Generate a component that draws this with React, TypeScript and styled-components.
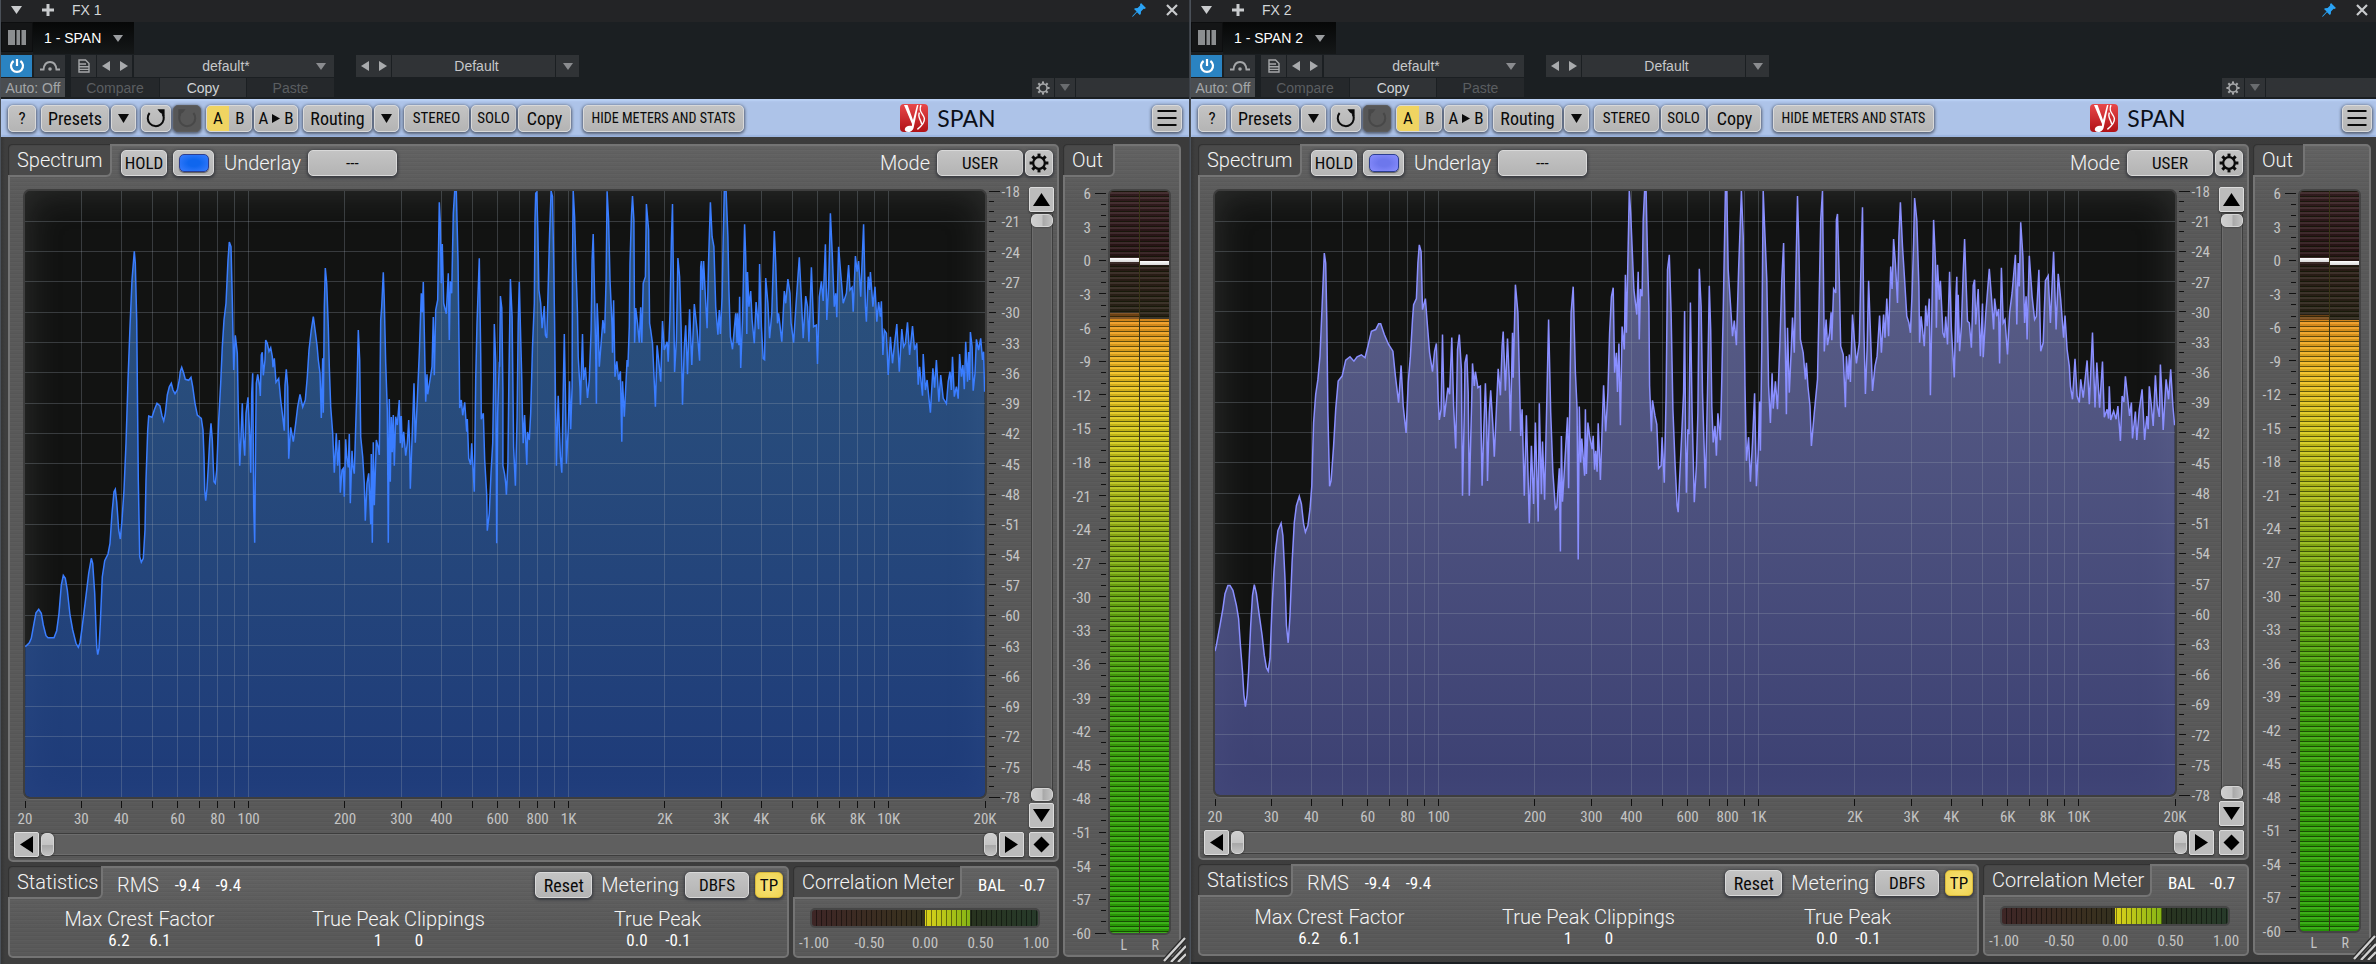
import React from 'react';
import styled, { createGlobalStyle, css } from 'styled-components';

/* ---------- data ---------- */

/* Each segment holds "x,y" samples. x is in 1/unit pixels counted from start,
   a pixel offset inside the plot; y is in thirds of a pixel. */
type TraceSegment = { start: number; unit: number; points: string };

type PluginState = {
  title: string;
  slot: string;
  color: string;
  swatch: string;
  fillTop: string;
  fillBottom: string;
  trace: TraceSegment[];
  lit: number;
  corrEnd: number;
};

const blueTrace: TraceSegment[] = [
  {
    start: -25,
    unit: 3,
    points:
      '76,1400 88,1388 94,1375 102,1330 108,1298 116,1288 124,1300 130,1335 138,1367 144,1373 162,1373 170,1352 177,1300 184,1215 190,1186 196,1195 202,1230 210,1305 218,1350 228,1390 235,1402 240,1388 246,1345 256,1265 266,1180 274,1135 278,1150 284,1240 290,1400 293,1424 297,1405 301,1330 307,1190 314,1142 324,1122 330,1090 336,1000 342,935 346,928 350,965 356,1050 361,1077 366,1020 372,930 378,790 384,600 390,440 396,300 403,214 406,250 410,420 415,900 419,1130 424,1147 430,1135 435,1050 438,900 443,750 446,708 456,712 463,690 471,670 480,678 486,708 491,723 496,700 502,645 508,620 514,610 519,630 525,641 532,630 538,600 541,574 545,562 551,580 556,598 566,601 573,592 578,620 585,670 592,705 604,715 609,750 612,830 614,930 617,962 621,925 625,860 629,780 633,730 637,780 640,860 642,905 646,910 650,870 656,720 662,610 667,500 672,420 678,370 684,240 688,186 693,200 697,360 701,570 706,466 712,520 715,690 719,857 723,770 727,670 730,770 734,827 738,700 744,652 749,770 752,878 755,640 758,580 761,980 764,1088 767,760 769,610 773,583 779,620 781,648 784,525 787,517 790,586 795,540 797,480 802,490 807,514 812,503 817,530 819,562 823,535 828,607 836,595 842,660 848,710 853,752 855,616 859,568 863,620 866,836 872,742 880,785 887,730 893,680 900,643 908,681 916,660 922,590 927,510 934,450 940,410 946,455 951,495 955,540 960,580 964,714 968,535 970,698 973,380 976,264 980,310 985,440 988,560 992,680 998,760 1003,878 1009,760 1013,857 1016,815 1018,780 1021,938 1026,870 1030,865 1033,950 1037,778 1040,830 1045,862 1048,762 1051,970 1056,812 1059,860 1063,881 1067,740 1071,620 1075,450 1079,540 1082,770 1088,830 1093,910 1096,1022 1101,910 1106,880 1109,950 1112,1033 1114,822 1117,1088 1120,787 1123,976 1129,780 1134,800 1138,825 1142,420 1145,380 1150,277 1153,365 1157,550 1162,690 1165,1088 1168,657 1171,905 1174,711 1177,817 1180,705 1183,857 1187,710 1192,735 1198,660 1201,790 1204,708 1207,803 1211,755 1217,827 1222,790 1226,720 1229,800 1231,926 1236,780 1242,610 1246,788 1252,660 1258,520 1264,340 1267,397 1270,306 1275,560 1277,665 1281,583 1283,643 1290,600 1296,560 1300,411 1303,586 1307,390 1313,360 1318,67 1321,130 1324,310 1327,192 1331,370 1339,401 1345,280 1348,480 1351,304 1355,340 1360,100 1364,33 1369,33 1374,240 1378,560 1379,684 1384,660 1388,706 1394,667 1400,755 1402,717 1406,835 1412,854 1415,790 1423,935 1427,600 1431,430 1438,235 1442,520 1444,718 1450,700 1454,840 1460,944 1462,1052 1468,1000 1473,880 1478,790 1481,600 1483,432 1487,540 1490,1090 1493,700 1498,545',
  },
  {
    start: 455,
    unit: 2.8,
    points:
      '55,560 57,348 61,384 64,630 64,857 69,882 72,910 74,944 78,850 81,594 85,297 90,410 94,800 99,917 104,710 107,430 110,306 113,440 117,600 119,710 121,790 125,705 131,854 133,756 138,780 142,700 147,500 152,370 154,120 156,40 159,36 162,160 165,330 170,370 174,445 180,378 183,465 187,474 191,320 195,160 199,33 203,50 206,230 209,430 211,640 214,857 219,647 225,830 229,878 233,640 236,462 239,640 242,851 247,750 251,604 254,748 258,620 259,250 261,33 265,110 268,240 273,400 275,530 280,625 281,674 287,462 290,600 295,562 301,654 306,600 311,450 314,240 317,162 321,350 324,520 326,671 328,370 331,440 334,560 339,490 344,420 349,460 353,300 356,34 360,120 364,300 370,440 371,518 374,361 378,590 383,544 388,600 393,574 397,785 399,604 404,710 409,600 412,540 414,560 418,440 420,250 424,110 427,48 431,120 433,488 436,384 441,430 446,488 450,382 453,488 457,310 463,290 466,72 472,150 475,430 478,450 483,490 491,680 496,496 502,560 506,605 511,423 516,510 524,485 527,545 532,400 536,180 539,72 543,420 545,576 550,480 554,234 559,290 563,440 567,674 572,500 576,436 581,583 587,388 593,555 600,372 608,450 615,542 618,262 620,243 623,330 626,243 631,350 636,445 640,240 645,67 650,170 655,200 660,380 666,464 670,390 673,462 678,350 681,180 684,33 689,33 694,170 697,330 701,470 707,508 716,400 720,490 721,400 725,496 727,350 730,564 735,420 741,133 744,230 747,462 749,276 753,380 758,333 762,420 768,490 773,366 780,448 783,252 788,440 793,536 797,539 800,294 806,370 811,475 817,400 824,153 828,250 833,430 836,400 845,485 852,333 856,370 862,297 868,340 871,430 878,488 885,370 894,232 899,340 905,475 912,348 917,380 921,485 928,262 934,440 942,435 945,552 950,350 956,304 961,363 967,193 971,420 976,320 981,100 986,210 992,380 996,340 999,412 1004,200 1010,280 1017,370 1026,340 1032,255 1036,330 1042,322 1045,395 1051,228 1056,275 1060,243 1066,350 1074,133 1079,380 1082,425 1087,290 1091,330 1093,276 1100,380 1106,320 1111,425 1116,366 1121,410 1124,364 1128,525 1132,450 1138,460 1143,585 1149,470 1155,550 1161,490 1167,432 1174,575 1181,447 1186,500 1191,490 1197,427 1203,525 1211,438 1217,510 1223,490 1227,614 1231,560 1239,647 1241,522 1247,630 1252,600 1261,698 1268,565 1273,623 1278,540 1285,665 1290,585 1297,655 1306,671 1311,605 1316,575 1320,630 1323,530 1328,650 1334,620 1339,656 1343,522 1348,590 1352,555 1356,628 1360,485 1365,605 1368,516 1371,600 1373,456 1378,500 1381,632 1386,580 1390,478 1396,510 1402,475 1407,540 1410,515 1413,635',
  },
];

const violetTrace: TraceSegment[] = [
  {
    start: -25,
    unit: 2.8,
    points:
      '70,1418 74,1400 84,1340 92,1290 98,1245 106,1220 112,1220 120,1235 130,1280 136,1320 141,1400 147,1480 151,1550 155,1585 160,1550 164,1480 170,1340 175,1250 180,1218 186,1245 194,1310 202,1370 208,1430 214,1468 219,1478 224,1440 229,1300 235,1180 240,1110 246,1055 255,1033 260,1070 266,1200 270,1340 275,1393 280,1310 286,1150 292,1030 298,980 306,952 312,975 318,1035 323,1060 330,1040 336,990 341,920 346,730 352,645 358,600 364,530 370,380 376,220 380,250 383,420 386,700 391,922 395,905 402,800 408,690 415,605 426,590 436,542 448,532 459,545 468,532 480,526 490,535 498,500 508,455 520,450 528,433 534,433 544,465 556,495 568,515 575,590 584,670 591,558 597,680 605,761 611,610 617,530 623,420 626,375 634,357 638,250 642,195 647,215 651,390 659,357 665,440 671,520 679,577 685,515 690,492 695,660 698,722 703,690 707,465 712,713 722,625 727,645 733,474 738,680 744,808 749,510 754,465 760,570 763,950 768,700 770,550 775,525 779,640 782,950 789,650 791,552 796,620 799,577 806,625 813,620 818,920 822,770 827,612 831,740 833,906 838,700 842,633 848,740 852,833 858,690 863,568 869,648 874,500 877,456 883,634 889,477 894,600 897,755 903,460 905,595 911,315 918,400 923,620 926,770 930,690 936,950 942,708 950,1033 956,800 962,975 967,730 975,1028 978,672 984,946 987,787 993,962 998,720 1004,420 1010,700 1016,880 1023,990 1027,985 1034,868 1037,1118 1040,770 1043,968 1050,840 1057,714 1060,928 1064,620 1067,400 1073,321 1079,580 1084,690 1087,1142 1090,682 1094,850 1097,778 1105,890 1107,690 1110,885 1114,730 1119,770 1126,810 1129,770 1133,872 1136,815 1140,878 1143,732 1149,903 1154,750 1158,618 1164,757 1170,640 1175,460 1180,352 1185,324 1189,580 1194,520 1197,638 1201,492 1205,738 1210,441 1216,510 1219,285 1222,460 1226,240 1230,33 1234,100 1237,180 1243,330 1251,405 1255,276 1258,480 1261,328 1266,350 1269,120 1273,33 1277,33 1281,230 1285,380 1287,620 1292,757 1295,663 1302,710 1307,735 1312,868 1319,860 1322,774 1328,911 1333,650 1337,270 1342,225 1347,400 1352,690 1358,850 1364,980 1367,1000 1371,900 1378,740 1382,640 1385,394 1388,800 1390,941 1394,750 1397,765 1401,369 1406,700 1412,970 1418,860 1422,700 1426,267 1431,380 1435,640 1443,928 1449,640 1454,318 1458,450 1461,680 1465,790 1470,740 1474,830 1478,702 1485,783 1489,600 1493,400 1499,33 1503,33 1507,270 1513,370 1519,470 1524,423 1530,497 1536,270 1544,33 1549,170 1554,620 1558,845 1564,774',
  },
  {
    start: 465,
    unit: 2.8,
    points:
      '197,908 203,790 209,642 214,922 219,820 223,667 225,815 229,500 233,33 237,140 243,300 248,620 253,731 258,582 261,688 267,606 273,690 280,480 285,300 290,190 294,440 298,705 301,445 306,640 311,520 315,414 320,520 325,250 329,48 333,200 337,480 345,520 351,600 354,550 358,620 364,680 368,800 376,700 385,600 389,400 394,120 399,33 402,330 404,516 409,420 413,497 419,460 423,398 425,482 430,328 436,340 438,120 441,102 446,300 450,500 457,525 463,684 466,530 471,600 474,525 477,608 483,405 489,490 494,552 502,490 508,200 511,82 515,450 519,644 524,510 528,303 534,480 539,635 546,560 552,530 559,408 564,520 570,405 574,475 579,357 584,470 590,260 594,328 598,178 603,250 609,370 613,170 617,67 623,200 629,300 635,410 641,430 645,460 650,340 654,190 657,54 663,120 669,320 671,490 675,410 684,500 688,378 692,440 698,357 701,648 706,360 710,120 715,240 718,445 721,255 726,360 729,303 736,460 741,475 744,411 749,495 755,276 760,450 768,594 773,340 775,291 777,490 779,345 783,515 788,440 793,280 797,178 801,310 805,425 810,430 816,505 821,318 825,300 828,435 835,328 841,530 847,372 849,533 856,405 866,267 872,350 878,450 881,357 887,410 892,388 895,552 900,264 905,430 910,420 917,525 923,400 930,340 939,225 943,435 947,250 950,320 954,127 960,230 965,430 969,350 972,480 978,228 986,350 993,420 998,410 1005,270 1010,515 1017,490 1023,303 1031,288 1037,430 1046,216 1053,450 1059,282 1066,360 1074,475 1078,408 1084,510 1090,560 1093,620 1099,660 1106,538 1112,650 1118,670 1122,600 1129,655 1140,543 1146,675 1155,459 1162,685 1167,549 1175,685 1183,546 1188,714 1196,690 1200,718 1202,621 1206,722 1214,695 1221,720 1226,680 1233,785 1238,650 1243,668 1247,591 1253,650 1259,710 1264,670 1267,778 1275,697 1279,782 1286,690 1294,630 1301,782 1307,710 1311,750 1314,621 1320,680 1325,740 1331,588 1336,675 1342,713 1345,555 1349,640 1353,752 1361,600 1368,660 1374,570 1380,680 1385,738',
  },
];

const PLOT_W = 960;
const PLOT_H = 606;

const tracePoints = (segments: TraceSegment[]) =>
  segments
    .flatMap(({ start, unit, points }) =>
      points.split(' ').map((pair) => {
        const [x, y] = pair.split(',').map(Number);
        return `${(start + x / unit).toFixed(1)},${(y / 3 - 11).toFixed(1)}`;
      }),
    )
    .join(' ');

const plugins: PluginState[] = [
  {
    title: 'FX 1',
    slot: '1 - SPAN',
    color: '#3a7dff',
    swatch: '#0f66ee',
    fillTop: 'rgba(60,122,188,0.62)',
    fillBottom: 'rgba(34,72,156,0.75)',
    trace: blueTrace,
    lit: 17.2,
    corrEnd: 70,
  },
  {
    title: 'FX 2',
    slot: '1 - SPAN 2',
    color: '#8a8fff',
    swatch: '#6d77ec',
    fillTop: 'rgba(130,136,198,0.66)',
    fillBottom: 'rgba(76,82,152,0.72)',
    trace: violetTrace,
    lit: 17.4,
    corrEnd: 71,
  },
];

const freqPos = (hz: number) => (Math.log10(hz / 20) / 3) * 100;
const gridFreqs = [30, 40, 50, 60, 70, 80, 90, 100, 200, 300, 400, 500, 600, 700, 800, 900, 1000, 2000, 3000, 4000, 5000, 6000, 7000, 8000, 9000, 10000];
const freqLabels: [number, string][] = [
  [20, '20'], [30, '30'], [40, '40'], [60, '60'], [80, '80'], [100, '100'], [200, '200'], [300, '300'],
  [400, '400'], [600, '600'], [800, '800'], [1000, '1K'], [2000, '2K'], [3000, '3K'], [4000, '4K'],
  [6000, '6K'], [8000, '8K'], [10000, '10K'], [20000, '20K'],
];
const dbValues = Array.from({ length: 61 }, (_, i) => -18 - i);
const outValues = Array.from({ length: 67 }, (_, i) => 6 - i);

/* ---------- shared styles ---------- */

const GlobalStyle = createGlobalStyle`
  *, *::before, *::after { box-sizing: border-box; }
  body { margin: 0; background: #1b1f22; font-family: "Liberation Sans", Arial, sans-serif; font-size: 14px; }
  button, select, input { font: inherit; color: inherit; margin: 0; padding: 0; border: 0; }
  h1, h2, dl, dt, dd, p { margin: 0; font: inherit; }
`;

const narrow = css`
  font-family: "Liberation Sans Narrow", "Roboto Condensed", "Liberation Sans", sans-serif;
`;
const light = css`
  font-family: Roboto, "Liberation Sans", sans-serif;
  font-weight: 300;
`;

const Rack = styled.main`
  display: grid;
  grid-template-columns: 595fr 593fr;
  min-height: 100vh;
`;

const Window = styled.section<{ $last: boolean }>`
  display: flex;
  flex-direction: column;
  min-width: 0;
  border-left: 1px solid #4a5058;
  border-right: ${(p) => (p.$last ? '0' : '1px solid #3c4148')};
  padding-bottom: ${(p) => (p.$last ? '2px' : '0')};
  background: #1b1f22;
  color: #d4d6d8;
`;

/* ---------- host chrome ---------- */

const TitleBar = styled.header<{ $gutter: number }>`
  display: flex;
  align-items: center;
  height: 22px;
  padding: 0 ${(p) => p.$gutter + 6}px 2px 7px;
  background: #232426;
`;

const TitleButton = styled.button`
  display: grid;
  place-items: center;
  width: 16px;
  height: 20px;
  background: none;
`;

const TitleText = styled.h1`
  flex: 1;
  padding-left: 16px;
`;

const Spacer = styled.div<{ $w: number }>`
  width: ${(p) => p.$w}px;
`;

const SlotBar = styled.div`
  display: flex;
  height: 33px;
`;

const RackButton = styled.button`
  display: grid;
  place-items: center;
  width: 32px;
  height: 30px;
  background: #141516;
  border: 1px solid #0d0e0f;
`;

const SlotTab = styled.button`
  display: flex;
  align-items: center;
  gap: 12px;
  height: 32px;
  padding: 0 11px;
  background: linear-gradient(#060707, #151819);
  color: #fff;
`;

const HostRow = styled.div<{ $height: number }>`
  display: flex;
  height: ${(p) => p.$height}px;
  margin-bottom: ${(p) => (p.$height === 22 ? 1 : 2)}px;
`;

const HostButton = styled.button<{ $w: number; $tone?: 'on' | 'auto' | 'dim'; $gap?: number; $end?: boolean }>`
  display: grid;
  place-items: center;
  width: ${(p) => p.$w}px;
  margin-right: ${(p) => p.$gap ?? 1}px;
  margin-left: ${(p) => (p.$end ? 'auto' : '0')};
  background: ${(p) => ({ on: '#2a83c2', auto: '#4a4d50', dim: '#25282b', base: '#303336' })[p.$tone ?? 'base']};
  color: ${(p) => ({ on: '#fff', auto: '#a4a6a8', dim: '#5b5e61', base: '#d2d4d6' })[p.$tone ?? 'base']};
`;

const HostSelectBox = styled.label<{ $w: number; $gap: number }>`
  display: grid;
  grid-template-columns: 1fr 18px;
  align-items: center;
  width: ${(p) => p.$w}px;
  margin-right: ${(p) => p.$gap}px;
  background: #303336;
  color: #c6c8ca;
`;

const HostSelect = styled.select<{ $full?: boolean }>`
  appearance: none;
  grid-column: 1 / ${(p) => (p.$full ? 'span 2' : 'span 1')};
  width: 100%;
  height: 22px;
  padding-left: ${(p) => (p.$full ? '6px' : '2px')};
  background: none;
  text-align: center;
  text-align-last: center;
`;

const HostFill = styled.div<{ $w: number }>`
  width: ${(p) => p.$w}px;
  background: #303336;
`;

/* ---------- plugin toolbar ---------- */

const PluginBar = styled.div<{ $gutter: number }>`
  display: flex;
  align-items: center;
  gap: 5px;
  height: 38px;
  padding: 0 ${(p) => p.$gutter + 4}px 0 7px;
  background: #adc3e8;
  box-shadow: inset 0 2px 2px #bcd2f6, inset 0 -2px 1px #9db6e0;
`;

const Group = styled.div`
  display: flex;
  gap: 2px;
`;

const chrome = css`
  background: linear-gradient(#c4c4c4, #b4b4b4);
  border: 1px solid #d9d9d9;
  border-radius: 5px;
  box-shadow: 0 1px 3px 1px rgba(30, 34, 44, 0.6);
  color: #0a0a0a;
`;

const PlugButton = styled.button<{ $w: number; $h?: number; $size?: number; $tone?: 'off' | 'yellow' }>`
  ${chrome}
  ${narrow}
  display: flex;
  align-items: center;
  justify-content: center;
  gap: 4px;
  width: ${(p) => p.$w}px;
  height: ${(p) => p.$h ?? 27}px;
  font-size: ${(p) => p.$size ?? 17}px;
  white-space: nowrap;
  ${(p) => p.$tone === 'off' && 'background: #575757; border-color: #5d5d5d; color: #484848;'}
  ${(p) => p.$tone === 'yellow' && 'background: radial-gradient(#f7e27d, #f0d44e); border-color: #d9b93c;'}
`;

const AbSwitch = styled.div`
  ${chrome}
  display: grid;
  grid-template-columns: 1fr 1fr;
  width: 46px;
  height: 27px;
  overflow: hidden;
`;

const AbHalf = styled.button<{ $on?: boolean }>`
  ${narrow}
  font-size: 17px;
  color: #0a0a0a;
  background: ${(p) => (p.$on ? '#f0d462' : 'transparent')};
`;

const WideButton = styled(PlugButton)`
  margin-left: 7px;
`;

const Brand = styled.div`
  display: flex;
  align-items: center;
  gap: 9px;
  margin: 0 auto;
  font-family: Lato, "Liberation Sans", sans-serif;
  font-size: 23px;
  color: #0b0f18;
`;

/* ---------- plugin body ---------- */

const Body = styled.div<{ $gutter: number }>`
  position: relative;
  flex: 1;
  display: grid;
  grid-template-columns: 1fr 118px;
  gap: 4px;
  padding: 7px ${(p) => p.$gutter + 5}px 7px 7px;
  background: linear-gradient(90deg, #353535, #3e3e3e 4px, #3b3b3b);
`;

const LeftColumn = styled.div`
  display: grid;
  grid-template-rows: 1fr 91px;
  gap: 4px;
  min-width: 0;
`;

const LowerRow = styled.div`
  display: grid;
  grid-template-columns: 1fr 266px;
  gap: 4px;
`;

const Panel = styled.section`
  display: flex;
  flex-direction: column;
  min-width: 0;
  border: 2px solid #747474;
  border-radius: 5px;
  background:
    repeating-linear-gradient(rgba(255, 255, 255, 0.02) 0 1px, transparent 1px 3px, rgba(0, 0, 0, 0.03) 3px 4px),
    linear-gradient(#626262, #595959 60px, #595959);
`;

const PanelHead = styled.div`
  display: flex;
  align-items: center;
  height: 31px;
`;

const Tab = styled.h2<{ $w: number }>`
  ${light}
  align-self: stretch;
  width: ${(p) => p.$w}px;
  margin: -2px 0 0 -2px;
  padding-left: 9px;
  border: solid #747474;
  border-width: 0 2px 2px 0;
  border-radius: 4px 0 6px 0;
  background: #4a4a4a;
  box-shadow: inset 1px 1px 1px #303030;
  color: #f4f4f4;
  font-size: 20px;
  line-height: 32px;
  white-space: nowrap;
`;

const Caption = styled.span<{ $left: number; $right: number }>`
  ${light}
  margin: 0 ${(p) => p.$right}px 0 ${(p) => p.$left}px;
  color: #f4f4f4;
  font-size: 20px;
  line-height: 24px;
  white-space: nowrap;
`;

const ControlLabel = styled.label`
  display: flex;
  align-items: center;
`;

const PlugSelect = styled.select<{ $w: number }>`
  ${chrome}
  ${narrow}
  appearance: none;
  width: ${(p) => p.$w}px;
  height: 26px;
  font-size: 17px;
  text-align: center;
  text-align-last: center;
`;

const HeadControls = styled.div<{ $end?: boolean }>`
  display: flex;
  align-items: center;
  padding-top: 3px;
  margin-left: ${(p) => (p.$end ? 'auto' : '9px')};
`;

const SwatchButton = styled.button<{ $color: string; $core: string }>`
  ${chrome}
  display: grid;
  place-items: center;
  width: 41px;
  height: 26px;
  margin-left: 6px;

  &::before {
    content: '';
    width: 30px;
    height: 18px;
    border-radius: 5px;
    border: 1px solid #2c3e90;
    background: radial-gradient(${(p) => p.$core} 30%, ${(p) => p.$color});
    box-shadow: 0 1px 1px rgba(0, 0, 0, 0.5);
  }
`;

const PlotArea = styled.div`
  flex: 1;
  display: grid;
  grid-template-columns: 1fr 25px;
  gap: 5px;
  padding: 10px 3px 0 13px;
`;

const Graph = styled.div`
  display: grid;
  grid-template-columns: 1fr 37px;
  grid-template-rows: minmax(300px, 1fr) 29px;
  padding-top: 2px;
  min-width: 0;
`;

const PlotFrame = styled.div`
  position: relative;
  border: 2px solid #3e3e3e;
  border-radius: 7px;
  overflow: hidden;
  background: #121312;
  box-shadow: 0 1px 0 #686868;
`;

const PlotSvg = styled.svg`
  position: absolute;
  inset: 0;
  width: 100%;
  height: 100%;
`;

const PlotGlow = styled.div`
  position: absolute;
  inset: 0;
  box-shadow: inset 0 0 36px rgba(120, 120, 120, 0.3);
`;

const Axis = styled.svg`
  display: block;
  width: 100%;
  height: 100%;
  overflow: visible;
  ${narrow}
  font-size: 15px;
  fill: #c4c4c4;
`;

const YAxisBox = styled.div<{ $top?: number }>`
  padding: ${(p) => p.$top ?? 2}px 0 2px;
`;

const XAxisBox = styled.div`
  padding: 0 2px;
`;

const Scroller = styled.div<{ $vertical?: boolean }>`
  display: flex;
  flex-direction: ${(p) => (p.$vertical ? 'column' : 'row')};
  align-items: center;
  gap: 2px;
  flex: 1;
  min-width: 0;
`;

const SquareButton = styled.button`
  display: grid;
  place-items: center;
  flex: none;
  width: 25px;
  height: 25px;
  border: 1px solid #dcdcdc;
  border-radius: 2px;
  background: #bcbcbc;
  box-shadow: 0 1px 2px #2c2c2c;
  color: #000;
`;

const Track = styled.div<{ $vertical?: boolean }>`
  flex: 1;
  display: flex;
  flex-direction: ${(p) => (p.$vertical ? 'column' : 'row')};
  align-items: center;
  min-width: 0;
  min-height: 0;
  ${(p) => (p.$vertical ? 'width: 22px;' : 'height: 23px;')}
  border: solid #3d3d3d;
  border-width: ${(p) => (p.$vertical ? '0 1px' : '1px 0')};
  background: #5f5f5f;
  box-shadow: inset 0 0 0 1px #6d6d6d;
`;

const thumb = css<{ $vertical?: boolean }>`
  appearance: none;
  width: ${(p) => (p.$vertical ? 22 : 13)}px;
  height: ${(p) => (p.$vertical ? 13 : 23)}px;
  border: 1px solid #d4d4d4;
  border-radius: 5px;
  background: linear-gradient(${(p) => (p.$vertical ? '90deg' : '180deg')}, #cfcfcf, #c4c4c4 50%, #a8a8a8 55%, #c2c2c2);
  box-shadow: 0 0 2px #222;
`;

const RangeEnd = styled.input<{ $vertical?: boolean }>`
  appearance: none;
  flex: 1;
  min-width: 0;
  min-height: 0;
  background: none;
  ${(p) => (p.$vertical ? 'writing-mode: vertical-lr; width: 22px;' : 'height: 23px;')}
  &::-webkit-slider-thumb { ${thumb} }
`;

const BottomScroll = styled.div`
  display: grid;
  grid-template-columns: 1fr 25px;
  gap: 5px;
  padding: 4px 3px 3px 4px;
`;

/* ---------- statistics ---------- */

const Pair = styled.span`
  display: inline-grid;
  grid-template-columns: 41px 41px;
  justify-content: center;
  ${narrow}
  color: #fff;
  font-size: 17px;
  line-height: 20px;
  text-align: center;
`;

const StatGrid = styled.dl`
  display: grid;
  grid-template-columns: repeat(3, 1fr);
  padding-top: 9px;
  text-align: center;
`;

const StatName = styled.dt`
  ${light}
  color: #f4f4f4;
  font-size: 20px;
  line-height: 22px;
`;

const CorrBar = styled.div<{ $end: number }>`
  height: 20px;
  margin: 9px 17px 0 15px;
  border: 2px solid #464646;
  border-radius: 5px;
  background:
    repeating-linear-gradient(90deg, transparent 0 4px, rgba(0, 0, 0, 0.45) 4px 5px),
    linear-gradient(
      90deg,
      #3e2626,
      #39301f 40%,
      #33301f 50%,
      #ddd21a 50%,
      #84b414 ${(p) => p.$end}%,
      #28331f ${(p) => p.$end}%,
      #273a2a
    );
`;

const CorrScale = styled.div`
  height: 24px;
  margin: 4px 21px 0 19px;
`;

/* ---------- output meter ---------- */

const OutGrid = styled.div`
  flex: 1;
  display: grid;
  grid-template-columns: 1fr 63px;
  grid-template-rows: 1fr 20px;
  padding: 12px 8px 0 0;
`;

const MeterFrame = styled.div`
  display: grid;
  grid-template-columns: 1fr 1fr;
  gap: 1px;
  border: 2px solid #444;
  border-radius: 6px;
  overflow: hidden;
  background: #3a3518;
`;

const Channel = styled.div<{ $lit: number; $faint?: boolean }>`
  position: relative;
  background:
    repeating-linear-gradient(rgba(10, 20, 0, 0.62) 0 1px, rgba(255, 255, 255, 0.08) 1px 3px, rgba(0, 0, 0, 0.12) 3px 5px),
    linear-gradient(
      #371f22,
      #2b1517 8%,
      #2d1f18 11%,
      #2b2418 ${(p) => p.$lit - (p.$faint ? 0.7 : 0)}%,
      #7a4a17 ${(p) => p.$lit - (p.$faint ? 0.7 : 0)}%,
      #7a4a17 ${(p) => p.$lit}%,
      #ee961f ${(p) => p.$lit}%,
      #f3c321 25%,
      #d8cc1a 33%,
      #a9bd18 43%,
      #72b010 54%,
      #3fa80a 68%,
      #2aa806
    );
`;

const PeakMark = styled.div<{ $at: number }>`
  position: absolute;
  top: ${(p) => p.$at}%;
  left: 0;
  right: 0;
  height: 4px;
  background: linear-gradient(#fff, #d8d8d8);
`;

const ChannelNames = styled.div`
  grid-column: 2;
  display: grid;
  grid-template-columns: 1fr 1fr;
  ${narrow}
  color: #c4c4c4;
  font-size: 14px;
  line-height: 20px;
  text-align: center;
`;

const ResizeGrip = styled.svg<{ $gutter: number }>`
  position: absolute;
  right: ${(p) => p.$gutter}px;
  bottom: 2px;
`;

/* ---------- icons ---------- */

const Tri = ({ dir = 'down', w = 10, h = 8, fill = 'currentColor' }: { dir?: 'up' | 'down' | 'left' | 'right'; w?: number; h?: number; fill?: string }) => {
  const d = { down: 'M0 0H10L5 10Z', up: 'M0 10H10L5 0Z', left: 'M10 0V10L0 5Z', right: 'M0 0V10L10 5Z' }[dir];
  return (
    <svg width={w} height={h} viewBox="0 0 10 10" preserveAspectRatio="none" fill={fill} aria-hidden="true">
      <path d={d} />
    </svg>
  );
};

const PlusIcon = () => (
  <svg width="14" height="14" viewBox="0 0 14 14" aria-hidden="true">
    <path d="M7 1V13M1 7H13" stroke="#c9cbcd" strokeWidth="3" />
  </svg>
);

const PinIcon = () => (
  <svg width="16" height="16" viewBox="0 0 16 16" fill="#2aa3f5" aria-hidden="true">
    <path d="M10 1L15 6L13.4 7L12.6 6.8L10 9.4L9.8 12L8.8 13L6 10.2L2 14.4L1 15L1.6 13.8L5.6 9.6L3 7L4 6.2L6.6 6L9.2 3.4L9 2.4Z" />
  </svg>
);

const CloseIcon = () => (
  <svg width="14" height="14" viewBox="0 0 14 14" aria-hidden="true">
    <path d="M2 2L12 12M12 2L2 12" stroke="#c9cbcd" strokeWidth="2.2" />
  </svg>
);

const RackIcon = () => (
  <svg width="18" height="15" viewBox="0 0 18 15" fill="#8c8e90" aria-hidden="true">
    <path d="M0 0H7V15H0ZM8.5 0H12V15H8.5ZM13.5 0H18V15H13.5Z" />
  </svg>
);

const PowerIcon = () => (
  <svg width="16" height="16" viewBox="0 0 16 16" fill="none" stroke="#fff" strokeWidth="2.2" aria-hidden="true">
    <path d="M4.6 3A6 6 0 1 0 11.4 3M8 1V8" />
  </svg>
);

const BypassIcon = () => (
  <svg width="20" height="12" viewBox="0 0 20 12" fill="none" stroke="#a5a7a9" strokeWidth="1.8" aria-hidden="true">
    <path d="M0 9.5H3.6C4 4.6 6.4 2 10 2S16 4.6 16.4 9.5H20" />
    <circle cx="10" cy="9" r="1.8" fill="#a5a7a9" stroke="none" />
  </svg>
);

const DocIcon = () => (
  <svg width="12" height="14" viewBox="0 0 12 14" fill="none" stroke="#a5a7a9" strokeWidth="1.4" aria-hidden="true">
    <path d="M1 1H7.5L11 4.5V13H1ZM1 5H8M1 7.8H11M1 10.4H11" />
  </svg>
);

const Gear = ({ size, color, teeth }: { size: number; color: string; teeth: number }) => (
  <svg width={size} height={size} viewBox="0 0 20 20" fill="none" stroke={color} aria-hidden="true">
    <circle cx="10" cy="10" r="5.8" strokeWidth="2.2" />
    {Array.from({ length: teeth }, (_, i) => (
      <path key={i} d="M10 0.6V4" strokeWidth="3" transform={`rotate(${(360 / teeth) * i} 10 10)`} />
    ))}
  </svg>
);

const TurnIcon = ({ redo }: { redo?: boolean }) => (
  <svg width="20" height="20" viewBox="0 0 20 20" fill="none" stroke="currentColor" strokeWidth="2" aria-hidden="true">
    <g transform={redo ? 'translate(20 0) scale(-1 1)' : undefined}>
      <path d="M3.6 5A8 8 0 1 0 16.6 6" />
      <path d="M11.4 1.2H18.6V8.4L16.6 6.2L14 4.4Z" fill="currentColor" stroke="none" />
    </g>
  </svg>
);

const MenuIcon = () => (
  <svg width="20" height="18" viewBox="0 0 20 18" stroke="#0a0a0a" strokeWidth="2" aria-hidden="true">
    <path d="M0.5 2H19.5M0.5 9H19.5M0.5 16H19.5" />
  </svg>
);

const LogoIcon = () => (
  <svg width="28" height="28" viewBox="0 0 28 28" aria-hidden="true">
    <defs>
      <linearGradient id="logo-red" x1="0" y1="0" x2="0" y2="1">
        <stop offset="0" stopColor="#e8484a" />
        <stop offset="1" stopColor="#b01217" />
      </linearGradient>
    </defs>
    <rect width="28" height="28" rx="4" fill="url(#logo-red)" />
    <path d="M4 1H7.6L13 16L17 1H18.4L14 22C13.6 25.6 11.6 28 8.4 28C5.6 28 4.6 26.6 4.8 25C5.2 22.6 8.4 21 11.8 22L12 20Z" fill="#fff" />
    <path d="M21 1C18 8 23.4 9.6 24.4 14.4C24.8 18.6 21.6 22 17.4 25.4M19.4 8.6C17.2 13 21 15.6 21.6 20" fill="none" stroke="#fff" strokeWidth="1.4" />
  </svg>
);

/* ---------- parts ---------- */

const Arrows = ({ gap, label }: { gap: number; label: string }) => (
  <>
    <HostButton $w={18} $gap={0} aria-label={`Previous ${label}`}>
      <Tri dir="left" w={8} h={10} fill="#a9abad" />
    </HostButton>
    <HostButton $w={17} $gap={gap} aria-label={`Next ${label}`}>
      <Tri dir="right" w={8} h={10} fill="#a9abad" />
    </HostButton>
  </>
);

const HostChrome = ({ state, gutter }: { state: PluginState; gutter: number }) => (
  <>
    <TitleBar $gutter={gutter}>
      <TitleButton aria-label="Window menu"><Tri w={11} h={8} fill="#c9cbcd" /></TitleButton>
      <Spacer $w={16} />
      <TitleButton aria-label="Add insert"><PlusIcon /></TitleButton>
      <TitleText>{state.title}</TitleText>
      <TitleButton aria-label="Pin window"><PinIcon /></TitleButton>
      <Spacer $w={17} />
      <TitleButton aria-label="Close"><CloseIcon /></TitleButton>
    </TitleBar>
    <SlotBar>
      <RackButton aria-label="Rack"><RackIcon /></RackButton>
      <SlotTab>{state.slot}<Tri w={10} h={7} fill="#9b9da0" /></SlotTab>
    </SlotBar>
    <HostRow $height={22}>
      <HostButton $w={31} $gap={2} $tone="on" aria-label="Power"><PowerIcon /></HostButton>
      <HostButton $w={31} $gap={6} aria-label="Bypass"><BypassIcon /></HostButton>
      <HostButton $w={25} aria-label="Preset file"><DocIcon /></HostButton>
      <Arrows gap={2} label="preset" />
      <HostSelectBox $w={200} $gap={22}>
        <HostSelect aria-label="Preset"><option>default*</option></HostSelect>
        <Tri w={10} h={7} fill="#8a8c8f" />
      </HostSelectBox>
      <Arrows gap={1} label="routing" />
      <HostSelectBox $w={163} $gap={1}>
        <HostSelect $full aria-label="Routing preset"><option>Default</option></HostSelect>
      </HostSelectBox>
      <HostButton $w={23} aria-label="Routing menu"><Tri w={10} h={7} fill="#8a8c8f" /></HostButton>
    </HostRow>
    <HostRow $height={19}>
      <HostButton $w={64} $gap={6} $tone="auto">Auto: Off</HostButton>
      <HostButton $w={88} $tone="dim">Compare</HostButton>
      <HostButton $w={86}>Copy</HostButton>
      <HostButton $w={87} $tone="dim">Paste</HostButton>
      <HostButton $w={22} $end aria-label="Settings"><Gear size={14} color="#a5a7a9" teeth={8} /></HostButton>
      <HostButton $w={20} aria-label="Settings menu"><Tri w={10} h={7} fill="#696c6f" /></HostButton>
      <HostFill $w={gutter + 110} />
    </HostRow>
  </>
);

const PluginToolbar = ({ gutter }: { gutter: number }) => (
  <PluginBar $gutter={gutter}>
    <PlugButton $w={28} aria-label="Help">?</PlugButton>
    <Group>
      <PlugButton $w={68} $size={18}>Presets</PlugButton>
      <PlugButton $w={25} aria-label="Preset list"><Tri w={11} h={9} /></PlugButton>
    </Group>
    <Group>
      <PlugButton $w={30} aria-label="Undo"><TurnIcon /></PlugButton>
      <PlugButton $w={28} $tone="off" aria-label="Redo" disabled><TurnIcon redo /></PlugButton>
    </Group>
    <Group>
      <AbSwitch role="group" aria-label="Compare states">
        <AbHalf $on>A</AbHalf>
        <AbHalf>B</AbHalf>
      </AbSwitch>
      <PlugButton $w={44}>A<Tri dir="right" w={8} h={9} />B</PlugButton>
    </Group>
    <Group>
      <PlugButton $w={69} $size={18}>Routing</PlugButton>
      <PlugButton $w={25} aria-label="Routing list"><Tri w={11} h={9} /></PlugButton>
    </Group>
    <Group>
      <PlugButton $w={65} $size={15}>STEREO</PlugButton>
      <PlugButton $w={45} $size={15}>SOLO</PlugButton>
      <PlugButton $w={53} $size={18}>Copy</PlugButton>
    </Group>
    <WideButton $w={161} $size={14}>HIDE METERS AND STATS</WideButton>
    <Brand><LogoIcon />SPAN</Brand>
    <PlugButton $w={30} aria-label="Menu"><MenuIcon /></PlugButton>
  </PluginBar>
);

const SpectrumPlot = ({ state, id }: { state: PluginState; id: string }) => {
  const points = tracePoints(state.trace);
  return (
    <PlotFrame>
      <PlotGlow />
      <PlotSvg viewBox={`0 0 ${PLOT_W} ${PLOT_H}`} preserveAspectRatio="none" role="img" aria-label="Spectrum">
        <defs>
          <linearGradient id={`${id}-fill`} gradientUnits="userSpaceOnUse" x1="0" y1="0" x2="0" y2={PLOT_H}>
            <stop offset="0" stopColor={state.fillTop} />
            <stop offset="1" stopColor={state.fillBottom} />
          </linearGradient>
        </defs>
        <polygon points={`0,${PLOT_H} ${points} ${PLOT_W},${PLOT_H}`} fill={`url(#${id}-fill)`} />
      </PlotSvg>
      <PlotSvg stroke="rgba(160,170,180,0.27)" shapeRendering="crispEdges" aria-hidden="true">
        {gridFreqs.map((f) => (
          <line key={f} x1={`${freqPos(f)}%`} x2={`${freqPos(f)}%`} y1="0" y2="100%" />
        ))}
        {Array.from({ length: 19 }, (_, i) => (
          <line key={i} x1="0" x2="100%" y1={`${(i + 1) * 5}%`} y2={`${(i + 1) * 5}%`} />
        ))}
      </PlotSvg>
      <PlotSvg viewBox={`0 0 ${PLOT_W} ${PLOT_H}`} preserveAspectRatio="none" aria-hidden="true">
        <polyline points={points} fill="none" stroke={state.color} strokeWidth="1.5" vectorEffect="non-scaling-stroke" />
      </PlotSvg>
    </PlotFrame>
  );
};

const DbAxis = () => (
  <YAxisBox>
    <Axis>
      {dbValues.map((v) => {
        const y = `${((-18 - v) / 60) * 100}%`;
        const end = v === -18 || v === -78 ? 13 : v % 3 === 0 ? 9 : 7;
        return (
          <React.Fragment key={v}>
            <line x1="2" x2={end} y1={y} y2={y} stroke="#111" shapeRendering="crispEdges" />
            {v % 3 === 0 && <text x="33" y={y} dy="6" textAnchor="end">{v}</text>}
          </React.Fragment>
        );
      })}
    </Axis>
  </YAxisBox>
);

const FreqAxis = () => (
  <XAxisBox>
    <Axis>
      {[20, ...gridFreqs, 20000].map((f) => (
        <line key={f} x1={`${freqPos(f)}%`} x2={`${freqPos(f)}%`} y1="2" y2="9" stroke="#111" shapeRendering="crispEdges" />
      ))}
      {freqLabels.map(([f, label]) => (
        <text key={f} x={`${freqPos(f)}%`} y="25" textAnchor="middle">{label}</text>
      ))}
    </Axis>
  </XAxisBox>
);

const RangeScroller = ({ vertical, label }: { vertical?: boolean; label: string }) => (
  <Scroller $vertical={vertical}>
    <SquareButton aria-label={`${label} back`}><Tri dir={vertical ? 'up' : 'left'} w={vertical ? 17 : 13} h={vertical ? 13 : 17} /></SquareButton>
    <Track $vertical={vertical}>
      <RangeEnd type="range" $vertical={vertical} min={0} max={50} defaultValue={0} aria-label={`${label} start`} />
      <RangeEnd type="range" $vertical={vertical} min={50} max={100} defaultValue={100} aria-label={`${label} end`} />
    </Track>
    <SquareButton aria-label={`${label} forward`}><Tri dir={vertical ? 'down' : 'right'} w={vertical ? 17 : 13} h={vertical ? 13 : 17} /></SquareButton>
  </Scroller>
);

const SpectrumPanel = ({ state, id }: { state: PluginState; id: string }) => (
  <Panel>
    <PanelHead>
      <Tab $w={104}>Spectrum</Tab>
      <HeadControls>
        <PlugButton $w={46} $h={26}>HOLD</PlugButton>
        <SwatchButton $color={state.color} $core={state.swatch} aria-label="Trace colour" />
        <ControlLabel>
          <Caption $left={10} $right={7}>Underlay</Caption>
          <PlugSelect $w={89}><option>---</option></PlugSelect>
        </ControlLabel>
      </HeadControls>
      <HeadControls $end>
        <ControlLabel>
          <Caption $left={0} $right={7}>Mode</Caption>
          <PlugSelect $w={86}><option>USER</option></PlugSelect>
        </ControlLabel>
        <Spacer $w={2} />
        <PlugButton $w={28} $h={26} aria-label="Spectrum settings"><Gear size={20} color="#0a0a0a" teeth={8} /></PlugButton>
        <Spacer $w={4} />
      </HeadControls>
    </PanelHead>
    <PlotArea>
      <Graph>
        <SpectrumPlot state={state} id={id} />
        <DbAxis />
        <FreqAxis />
      </Graph>
      <RangeScroller vertical label="Level range" />
    </PlotArea>
    <BottomScroll>
      <RangeScroller label="Frequency range" />
      <SquareButton aria-label="Reset zoom">
        <svg width="17" height="17" viewBox="0 0 17 17" aria-hidden="true"><path d="M8.5 0.5L16.5 8.5L8.5 16.5L0.5 8.5Z" /></svg>
      </SquareButton>
    </BottomScroll>
  </Panel>
);

const stats: [string, string, string][] = [
  ['Max Crest Factor', '6.2', '6.1'],
  ['True Peak Clippings', '1', '0'],
  ['True Peak', '0.0', '-0.1'],
];

const StatisticsPanel = () => (
  <Panel>
    <PanelHead>
      <Tab $w={95}>Statistics</Tab>
      <HeadControls>
        <Caption $left={5} $right={8}>RMS</Caption>
        <Pair><span>-9.4</span><span>-9.4</span></Pair>
      </HeadControls>
      <HeadControls $end>
        <PlugButton $w={57} $h={26} $size={18}>Reset</PlugButton>
        <ControlLabel>
          <Caption $left={9} $right={6}>Metering</Caption>
          <PlugSelect $w={64}><option>DBFS</option></PlugSelect>
        </ControlLabel>
        <Spacer $w={6} />
        <PlugButton $w={28} $h={26} $tone="yellow">TP</PlugButton>
        <Spacer $w={4} />
      </HeadControls>
    </PanelHead>
    <StatGrid>
      {stats.map(([name, l, r]) => (
        <div key={name}>
          <StatName>{name}</StatName>
          <dd><Pair><span>{l}</span><span>{r}</span></Pair></dd>
        </div>
      ))}
    </StatGrid>
  </Panel>
);

const CorrelationPanel = ({ end }: { end: number }) => (
  <Panel>
    <PanelHead>
      <Tab $w={169}>Correlation Meter</Tab>
      <HeadControls>
        <Pair><span>BAL</span><span>-0.7</span></Pair>
      </HeadControls>
    </PanelHead>
    <CorrBar $end={end} role="meter" aria-label="Correlation" aria-valuemin={-1} aria-valuemax={1} aria-valuenow={0.4} />
    <CorrScale>
      <Axis>
        {['-1.00', '-0.50', '0.00', '0.50', '1.00'].map((t, i) => (
          <text key={t} x={`${i * 25}%`} y="16" textAnchor="middle">{t}</text>
        ))}
      </Axis>
    </CorrScale>
  </Panel>
);

const OutPanel = ({ lit }: { lit: number }) => (
  <Panel>
    <PanelHead>
      <Tab $w={52}>Out</Tab>
    </PanelHead>
    <OutGrid>
      <YAxisBox $top={4}>
        <Axis>
          {outValues.map((v) => {
            const y = `${((6 - v) / 66) * 100}%`;
            const start = v === 6 || v === -60 ? 30 : v % 3 === 0 ? 34 : 36;
            return (
              <React.Fragment key={v}>
                <line x1={start} x2="41" y1={y} y2={y} stroke="#111" shapeRendering="crispEdges" />
                {v % 3 === 0 && <text x="26" y={y} dy="6" textAnchor="end">{v}</text>}
              </React.Fragment>
            );
          })}
        </Axis>
      </YAxisBox>
      <MeterFrame>
        <Channel $lit={lit} $faint role="meter" aria-label="Left" aria-valuenow={-5}><PeakMark $at={9} /></Channel>
        <Channel $lit={lit} role="meter" aria-label="Right" aria-valuenow={-5}><PeakMark $at={9.4} /></Channel>
      </MeterFrame>
      <ChannelNames><span>L</span><span>R</span></ChannelNames>
    </OutGrid>
  </Panel>
);

const PluginWindow = ({ state, last }: { state: PluginState; last: boolean }) => {
  const gutter = last ? 0 : 3;
  return (
    <Window $last={last}>
      <HostChrome state={state} gutter={gutter} />
      <PluginToolbar gutter={gutter} />
      <Body $gutter={gutter}>
        <LeftColumn>
          <SpectrumPanel state={state} id={last ? 'fx2' : 'fx1'} />
          <LowerRow>
            <StatisticsPanel />
            <CorrelationPanel end={state.corrEnd} />
          </LowerRow>
        </LeftColumn>
        <OutPanel lit={state.lit} />
        <ResizeGrip $gutter={gutter} width="23" height="25" viewBox="0 0 23 25" aria-hidden="true">
          <path d="M1 24L22 1M8 25L23 9M15 25L23 17" stroke="#2a2a2a" strokeWidth="5" />
          <path d="M1 24L22 1M8 25L23 9M15 25L23 17" stroke="#d0d0d0" strokeWidth="2.4" />
        </ResizeGrip>
      </Body>
    </Window>
  );
};

export default function App() {
  return (
    <>
      <GlobalStyle />
      <Rack>
        {plugins.map((state, i) => (
          <PluginWindow key={state.title} state={state} last={i === plugins.length - 1} />
        ))}
      </Rack>
    </>
  );
}
